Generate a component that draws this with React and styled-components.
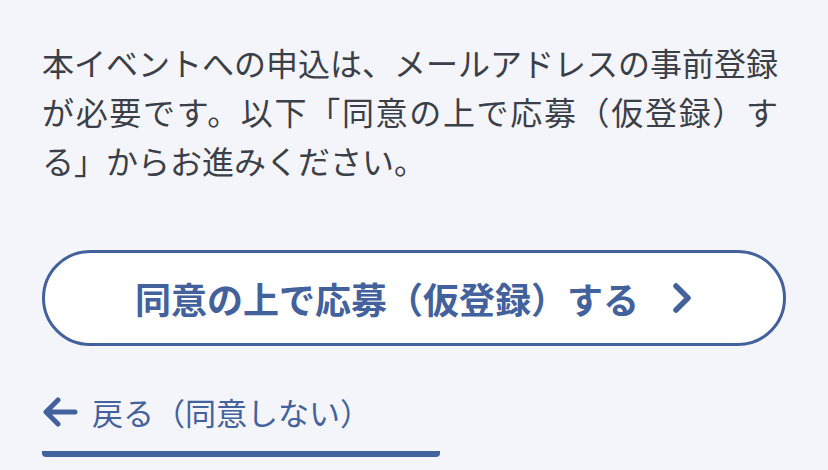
import React from 'react'
import { styled, createGlobalStyle } from 'styled-components'

const COLORS = {
  bg: '#f4f5fa',
  text: '#3b3f48',
  primary: '#42619d',
}

const GlobalStyle = createGlobalStyle`
  html, body {
    margin: 0;
    padding: 0;
    background: ${COLORS.bg};
  }
  body {
    font-family: "Noto Sans CJK JP", "Noto Sans", sans-serif;
  }
`

const ChevronRight = () => (
  <svg width="22" height="32" viewBox="0 0 22 32" fill="none">
    <path d="M5 4 L17 16 L5 28" stroke={COLORS.primary} strokeWidth="5.5" strokeLinecap="round" strokeLinejoin="round" />
  </svg>
)

const ArrowLeft = () => (
  <svg width="36" height="30" viewBox="0 0 36 30" fill="none">
    <path d="M33 15 H5 M16 3 L4 15 L16 27" stroke={COLORS.primary} strokeWidth="5" strokeLinecap="round" strokeLinejoin="round" />
  </svg>
)

const App = () => {
  return (
    <>
      <GlobalStyle />
      <Page>
        <Lead>
          本イベントへの申込は、メールアドレスの事前登録が必要です。以下「同意の上で応募（仮登録）する」からお進みください。
        </Lead>
        <AgreeButton type="button">
          <span>同意の上で応募（仮登録）する</span>
          <ChevronRight />
        </AgreeButton>
        <BackLink href="#">
          <ArrowLeft />
          <span>戻る（同意しない）</span>
        </BackLink>
      </Page>
    </>
  )
}

const Page = styled.main`
  padding: 38px 42px 0 42px;
  display: flex;
  flex-direction: column;
  align-items: flex-start;
`
const Lead = styled.p`
  margin: 0;
  width: 736px;
  font-size: 32px;
  line-height: 49px;
  color: ${COLORS.text};
  text-align: justify;
`
const AgreeButton = styled.button`
  margin-top: 65px;
  width: 744px;
  height: 96px;
  box-sizing: border-box;
  border: 3.5px solid ${COLORS.primary};
  border-radius: 48px;
  background: #fff;
  display: flex;
  align-items: center;
  justify-content: center;
  gap: 32px;
  font-family: inherit;
  font-size: 36px;
  font-weight: 700;
  color: ${COLORS.primary};
  padding: 0;
  cursor: pointer;
`
const BackLink = styled.a`
  margin-top: 46px;
  width: 398px;
  display: flex;
  align-items: center;
  gap: 14px;
  padding-bottom: 19px;
  border-bottom: 6px solid ${COLORS.primary};
  border-radius: 0 0 4px 4px;
  font-size: 31px;
  line-height: 40px;
  color: ${COLORS.primary};
  text-decoration: none;
`

export default App
